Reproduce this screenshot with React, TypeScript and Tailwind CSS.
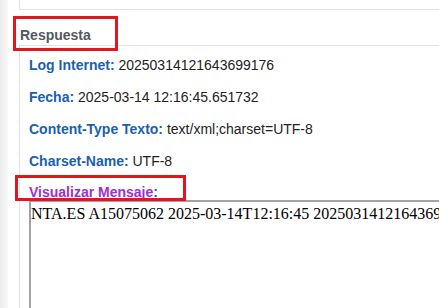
import React from 'react';

const rows = [
  { label: 'Log Internet:', value: '20250314121643699176' },
  { label: 'Fecha:', value: '2025-03-14 12:16:45.651732' },
  { label: 'Content-Type Texto:', value: 'text/xml;charset=UTF-8' },
  { label: 'Charset-Name:', value: 'UTF-8' },
];

const mensaje = 'NTA.ES A15075062 2025-03-14T12:16:45 20250314121643699176';

const App: React.FC = () => {
  return (
    <div
      className="relative flex h-[308px] w-[439px] overflow-hidden bg-white"
      style={{ fontFamily: '"Liberation Sans", Arial, sans-serif' }}
    >
      {/* left gutter */}
      <div className="w-[8px] shrink-0 bg-gradient-to-r from-[#ececec] to-[#f8f8f8]" />
      <div className="w-[11px] shrink-0" />

      <div className="flex min-w-0 flex-1 flex-col">
        <div className="h-[10px] shrink-0 border-b border-l border-[#dde5ec]" />

        <h3 className="border-b border-[#dde5ec] pl-px pt-[15px] text-[14px] font-bold leading-[20px] text-[#525960]">
          Respuesta
        </h3>

        <div className="flex flex-1 flex-col border-l border-[#dde5ec] pl-[9px] pt-[9px]">
          <div className="flex flex-col gap-[12px]">
            {rows.map((r) => (
              <p key={r.label} className="whitespace-nowrap text-[14px] leading-[20px] text-[#222]">
                <span className="font-bold text-[#1a5fb0]">{r.label}</span> {r.value}
              </p>
            ))}
          </div>
          <p className="mt-[13px] whitespace-nowrap text-[14px] font-bold leading-[16px] text-[#1a5fb0]">
            <span className="text-[#9b30cf]">Visualizar Mensaje</span>:
          </p>
          <textarea
            readOnly
            value={mensaje}
            wrap="off"
            className="h-[200px] w-[700px] shrink-0 resize-none overflow-hidden border-2 border-[#a3a3a3] p-0 text-[16px] text-black outline-none"
            style={{ fontFamily: '"Liberation Serif", "Times New Roman", serif' }}
          />
        </div>
      </div>

      {/* annotation boxes */}
      <div className="pointer-events-none absolute left-[13px] top-[16px] h-[35px] w-[105px] border-[3px] border-[#e4151f]" />
      <div className="pointer-events-none absolute left-[15px] top-[175px] h-[26px] w-[171px] border-[3px] border-[#e4151f]" />
    </div>
  );
};

export default App;
